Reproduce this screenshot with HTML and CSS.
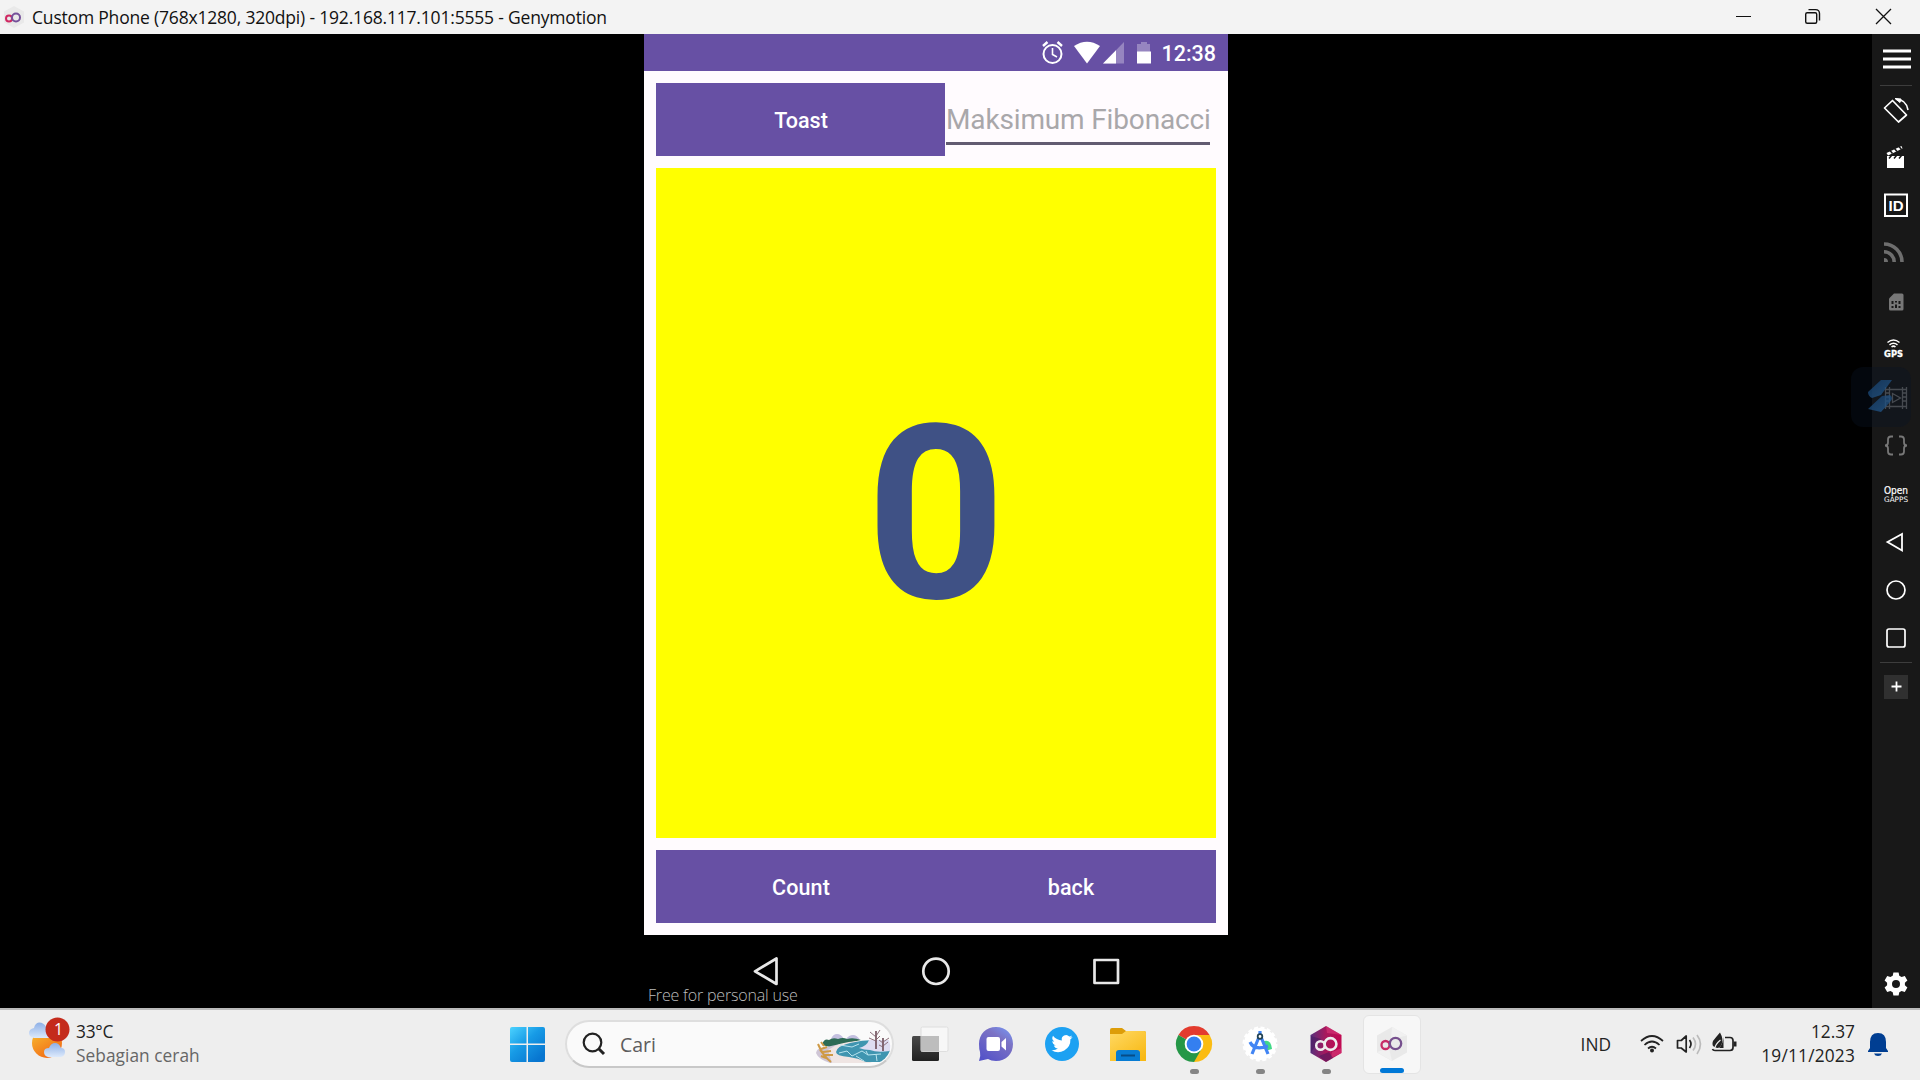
FILE: index.html
```html
<!DOCTYPE html>
<html lang="id">
<head>
<meta charset="utf-8">
<title>Genymotion</title>
<link rel="stylesheet" href="styles.css">
</head>
<body>
<header class="titlebar">
  <svg class="app-icon" width="22" height="24" viewBox="0 0 22 24"><path d="M11 1l10 5.500v11L11 23 1 17.500v-11z" fill="#e9e9e9"/><circle cx="6" cy="13.500" r="3" fill="none" stroke="#d02862" stroke-width="2"/><circle cx="13" cy="12.500" r="4" fill="none" stroke="#75509a" stroke-width="2"/></svg>
  <span class="title">Custom Phone (768x1280, 320dpi) - 192.168.117.101:5555 - Genymotion</span>
  <svg class="window-controls" width="210" height="34" viewBox="0 0 210 34" fill="none" stroke="#111"><path d="M26 16.500h15"/><rect x="95.700" y="12.700" width="11" height="10.600" rx="1.500" stroke-width="1.400"/><path d="M98.500 9.600h7q4 0 4 4v7" stroke-width="1.400"/><path d="M166 9l15 15M181 9l-15 15" stroke-width="1.300"/></svg>
</header>

<main class="workspace">
  <section class="stage">
    <div class="phone">
      <div class="statusbar">
        <svg width="110" height="24" viewBox="0 0 110 24">
          <g fill="none" stroke="#fff" stroke-width="2"><circle cx="10.500" cy="13" r="9"/><path d="M10.500 7v6.500l4.500 2.500" stroke-width="1.600"/><path d="M1 5l4.500-4M20 5l-4.500-4" stroke-width="2.400"/></g>
          <path d="M32 5Q45-3.500 58 5L45 22.500z" fill="#fff"/>
          <path d="M82 1v21.500H61z" fill="#9685c0"/><path d="M74 9.200v13.300H61z" fill="#fff"/>
          <path d="M99 1h6v2h3v8H95V3h4z" fill="#9685c0"/><path d="M95 10.500h14v12H95z" fill="#fff"/>
        </svg>
        <span class="clock">12:38</span>
      </div>
      <div class="app">
        <div class="row">
          <div class="button">Toast</div>
          <div class="input"><span>Maksimum Fibonacci</span></div>
        </div>
        <div class="counter"><span>0</span></div>
        <div class="row actions">
          <div class="button">Count</div>
          <div class="button back">back</div>
        </div>
      </div>
      <div class="navbar">
        <svg width="584" height="73" viewBox="0 0 584 73" fill="none" stroke="#e8e8e8" stroke-width="2.700" stroke-linejoin="round"><path d="M132.500 23.500v25.500L111 36.300z"/><circle cx="292" cy="36.300" r="12.700"/><rect x="450.500" y="25" width="23.500" height="23"/></svg>
        <span class="license">Free for personal use</span>
      </div>
    </div>
  </section>

  <aside class="toolbar">
    <svg width="48" height="51" viewBox="0 0 48 51"><path d="M11 17h28M11 25h28M11 33h28" stroke="#fff" stroke-width="3.200"/></svg>
    <hr>
    <svg width="48" height="48" viewBox="0 0 48 48" fill="none" stroke="#fff" stroke-width="1.700" stroke-linejoin="round"><path d="M20.500 14.500l14 14.500-8 7L12.500 22z"/><path d="M24 13.300q10 0 12 10.700" stroke-width="1.600"/><path d="M23 12.500l5 4 1-3.500z" fill="#fff" stroke-width="1"/></svg>
    <svg width="48" height="48" viewBox="0 0 48 48"><path d="M15 22h17v12H15z" fill="#fff"/><path d="M14.500 19L29.500 12l1 2.500L16 21.500z" fill="#fff"/><path d="M18 16.500l2.500 3M22.500 14.500l2.500 3M27 12.500l2.500 3M17 24.500l2.500-3M22 24.500l2.500-3M27 24.500l2.500-3" stroke="#181818" stroke-width="1.500"/></svg>
    <svg width="48" height="48" viewBox="0 0 48 48"><rect x="13" y="12.500" width="22" height="21.500" fill="none" stroke="#fff" stroke-width="2"/><text x="24" y="28.700" class="glyph id">ID</text></svg>
    <svg width="48" height="48" viewBox="0 0 48 48" fill="none" stroke="#6e6e6e" stroke-width="3.600"><path d="M12 14a18 18 0 0 1 18 18M12 21.800a10.200 10.200 0 0 1 10.200 10.200"/><path d="M12 28a4 4 0 0 1 4 4h-4z" fill="#6e6e6e" stroke="none"/></svg>
    <svg width="48" height="48" viewBox="0 0 48 48"><path d="M22 15.500h8q1.500 0 1.500 1.500v14q0 1.500-1.500 1.500H18.500Q17 32.500 17 31V20.500z" fill="#777"/><path d="M20.500 23v3m3.500-3v1.500m3.500-1.500v3M20.500 28v2m3.500-3.500V30m3.500-2v2" stroke="#181818" stroke-width="2"/></svg>
    <svg width="48" height="48" viewBox="0 0 48 48"><g fill="none" stroke="#fff" stroke-width="1.500"><path d="M15.500 16.500q6-5 12 0M17.500 18.800q4-3.200 8 0M19.500 21q2-1.700 4 0"/></g><text x="21.600" y="31" class="glyph gps" textLength="19" lengthAdjust="spacingAndGlyphs">GPS</text></svg>
    <svg width="48" height="48" viewBox="0 0 48 48" fill="none" stroke="#686868" stroke-width="1.300"><path d="M13.500 13v22M17.500 13v22M30.500 13v22M34.500 13v22M13 15.500h22M13 32.500h22M13.500 19h4m-4 4h4m-4 4h4m13-8h4m-4 4h4m-4 4h4"/><path d="M20.500 19.500l8 4.500-8 4.500z"/></svg>
    <svg width="48" height="48" viewBox="0 0 48 48" fill="none" stroke="#777" stroke-width="1.800"><path d="M21 14.500h-2q-3 0-3 3v3q0 3-3 3 3 0 3 3v3q0 3 3 3h2M27 14.500h2q3 0 3 3v3q0 3 3 3-3 0-3 3v3q0 3-3 3h-2"/></svg>
    <svg width="48" height="48" viewBox="0 0 48 48"><text x="24" y="23.500" class="glyph open" textLength="24" lengthAdjust="spacingAndGlyphs">Open</text><text x="24" y="31.500" class="glyph gapps" textLength="24" lengthAdjust="spacingAndGlyphs">GAPPS</text></svg>
    <svg width="48" height="48" viewBox="0 0 48 48"><path d="M30 16v16.500L15.500 24z" fill="none" stroke="#fff" stroke-width="1.800"/></svg>
    <svg width="48" height="48" viewBox="0 0 48 48"><circle cx="24" cy="24" r="9" fill="none" stroke="#fff" stroke-width="1.700"/></svg>
    <svg width="48" height="48" viewBox="0 0 48 48"><rect x="15" y="15" width="18" height="18" rx="2" fill="none" stroke="#fff" stroke-width="1.700"/></svg>
    <hr>
    <svg width="48" height="48" viewBox="0 0 48 48"><path d="M12 12h24v24H12z" fill="#303030"/><path d="M24.500 18.500v10M19.500 23.500h10" stroke="#fff" stroke-width="1.800"/></svg>
    <svg class="gear" width="48" height="48" viewBox="0 0 48 48" fill="#fff"><path fill-rule="evenodd" d="M21.400 12.500h5.200l.7 3.300 2.300 1.300 3.200-1 2.600 4.500-2.500 2.200v2.500l2.500 2.200-2.600 4.500-3.200-1-2.300 1.300-.7 3.200h-5.200l-.7-3.200-2.300-1.300-3.200 1-2.600-4.500 2.500-2.200v-2.500l-2.500-2.200 2.600-4.500 3.200 1 2.300-1.300zM24 20a4 4 0 1 0 0 8 4 4 0 0 0 0-8z"/></svg>
    <svg class="recorder-badge" width="62" height="62" viewBox="0 0 62 62"><defs><linearGradient id="rec" x2="1" y2="1"><stop stop-color="#17406c"/><stop offset="1" stop-color="#255d93"/></linearGradient></defs><rect x="1" y="1" width="60" height="60" rx="12" fill="#0a1326" opacity=".35"/><g fill="url(#rec)" opacity=".75"><path d="M31 14h11L31 29l-9 3q-4-2-4-6z"/><path d="M18 43l14-13 8-1q4 3 0 7l-9 10z"/></g></svg>
  </aside>
</main>

<footer class="taskbar">
  <div class="weather">
    <svg width="42" height="46" viewBox="0 0 42 46"><defs><linearGradient id="sun" x2=".6" y2="1"><stop stop-color="#f8c332"/><stop offset="1" stop-color="#f26b16"/></linearGradient><linearGradient id="cloud" x2="0" y2="1"><stop stop-color="#8eb0e7"/><stop offset="1" stop-color="#dce9fb"/></linearGradient></defs><circle cx="18" cy="27" r="15" fill="url(#sun)"/><path d="M5 22q-5-1-5-5t5-5q1-5 5-5.500 5 0 7 4.500l5 6v5z" fill="url(#cloud)"/><path d="M19 41q-4-1-4-5t5-4q2-5 6-5t6 5q4 0 4 4t-4 5z" fill="url(#cloud)"/><circle cx="28.500" cy="13.500" r="12" fill="#c42b1c"/><text x="29.500" y="19" class="badge-count">1</text></svg>
    <div class="forecast"><span>33°C</span><span class="muted">Sebagian cerah</span></div>
  </div>

  <div class="apps">
    <svg class="start" width="36" height="36" viewBox="0 0 36 36"><defs><linearGradient id="win" gradientUnits="userSpaceOnUse" x1="0" y1="0" x2="28" y2="32"><stop stop-color="#4cd3ff"/><stop offset=".5" stop-color="#179be6"/><stop offset="1" stop-color="#0876d0"/></linearGradient></defs><path d="M2 0h14.500v16.500H0V2q0-2 2-2zM18 0h15q2 0 2 2v14.500H18zM0 18h16.500v17H2q-2 0-2-2zM18 18h17v15q0 2-2 2H18z" fill="url(#win)"/></svg>
    <div class="search">
      <svg width="24" height="24" viewBox="0 0 24 24" fill="none" stroke="#222"><circle cx="10.500" cy="10.500" r="8.800" stroke-width="2.200"/><path d="M16.500 16.500l5.500 5.500" stroke-width="3"/></svg>
      <span>Cari</span>
      <svg class="scene" width="75" height="36" viewBox="0 0 75 36">
        <path d="M15 11q2-5 6-5t7 5zM30 11q3-4 7-4t7 5z" fill="#c3bfdf"/>
        <path d="M6 17q2-7 7-5 4-3 9-1 5-2 9 0 6-2 14 1l-18 4-13 3z" fill="#2d6b55"/>
        <path d="M0 25q1-5 6-5l18-4 4 14 18 5H14Q2 31 0 25z" fill="#cfc6d6"/>
        <path d="M12 22q10-8 30-9l-10 9q14 8 24 13H16z" fill="#efe5e3"/>
        <path d="M20 24q1-6 14-9 12-3 24-3h8l8 10q0 6-3 10l-4 2H50q-8-4-17-5-13-1-13-5z" fill="#3f95b0"/>
        <path d="M43 20q8-2 10-8h20q2 6 1 11-13 2-20-1-6 0-11-2z" fill="#dedcf2"/>
        <path d="M24 17l12 2 7-3M23 25l8-2 5 5 10-5 6 4 13-1M40 28l8 5m4-6-2-4m10 3 1 7" fill="none" stroke="#b9e4ee" stroke-width="1"/>
        <path d="M60 21V3M67 23V10" stroke="#6b4a55" stroke-width="1.600"/>
        <path d="M60 9l-6-5m6 9-7-3m7-2 4-6m-4 10 4-4M67 15l-4-3m4 2 6-4m-6 8 5-4m-5 5-4-2" fill="none" stroke="#80616c" stroke-width=".9"/>
        <path d="M15 34Q7 28 2 16m3 5 6-2m-4 5 8-1m-6 4 8 0m-9 0-4-5m6 8-5-2m3-10-3-4" fill="none" stroke="#cf9a45" stroke-width="2"/>
      </svg>
    </div>
    <div class="pinned">
      <div class="app-slot"><svg width="38" height="38" viewBox="0 0 38 38"><defs><linearGradient id="tv" x2="0" y2="1"><stop stop-color="#494949"/><stop offset="1" stop-color="#202020"/></linearGradient></defs><rect x="1" y="11" width="27" height="25" rx="1.500" fill="url(#tv)"/><rect x="10" y="2" width="27" height="24.500" rx="1.500" fill="#f7f7f7" stroke="#dedede"/><path d="M10 11h18v15.500H10z" fill="#bdbdbd"/></svg></div>
      <div class="app-slot"><svg width="38" height="38" viewBox="0 0 38 38"><defs><linearGradient id="chat" x1=".9" y1="0" x2=".2" y2="1"><stop stop-color="#7796f3"/><stop offset=".35" stop-color="#7b72c4"/><stop offset="1" stop-color="#5553c8"/></linearGradient></defs><path d="M19 2c10 0 17 7 17 17s-7 17-17 17q-5 0-8-2l-9 2q2-5 1-9-1-3-1-8C2 9 9 2 19 2z" fill="url(#chat)"/><rect x="9.500" y="12" width="13.500" height="14" rx="2" fill="#fff"/><path d="M24.500 17l4.500-4v12.500l-4.500-4z" fill="#fff"/></svg></div>
      <div class="app-slot"><svg width="38" height="38" viewBox="0 0 38 38"><circle cx="19" cy="19" r="17" fill="#1da1f2"/><g transform="translate(8.500 8) scale(.88)"><path fill="#fff" d="M24 4.600a10 10 0 0 1-2.800.8 5 5 0 0 0 2.100-2.700 10 10 0 0 1-3.100 1.200 4.900 4.900 0 0 0-8.400 4.500A14 14 0 0 1 1.700 3.200a4.900 4.900 0 0 0 1.500 6.500 5 5 0 0 1-2.200-.6 4.900 4.900 0 0 0 3.900 4.900 5 5 0 0 1-2.200.1 4.900 4.900 0 0 0 4.600 3.400A10 10 0 0 1 0 19.500a14 14 0 0 0 21.500-12.400A10 10 0 0 0 24 4.600z"/></g></svg></div>
      <div class="app-slot"><svg width="38" height="38" viewBox="0 0 38 38"><defs><linearGradient id="folder" x2=".8" y2="1"><stop stop-color="#ffd964"/><stop offset="1" stop-color="#f8b914"/></linearGradient></defs><path d="M1 5q0-2 2-2h10l4 3h18q2 0 2 2v9H1z" fill="#dd9d09"/><path d="M1 9h12l4-3h18q2 0 2 2v28H1z" fill="url(#folder)"/><path d="M7 36V28q0-3 3-3h18q3 0 3 3v8z" fill="#087cd3"/><path d="M12 30.500h14" stroke="#074c86" stroke-width="2"/></svg></div>
      <div class="app-slot running"><svg width="38" height="38" viewBox="0 0 38 38"><path d="M19 19L3.400 10A18 18 0 0 1 34.600 10z" fill="#e33b2e"/><path d="M19 19V10h15.600A18 18 0 0 1 19 37z" fill="#fbbc12"/><path d="M19 19l7.800 4.500L19 37A18 18 0 0 1 3.400 10z" fill="#259747"/><circle cx="19" cy="19" r="9.300" fill="#fff"/><circle cx="19" cy="19" r="7.400" fill="#347ff0"/></svg></div>
      <div class="app-slot running"><svg width="38" height="38" viewBox="0 0 38 38"><circle cx="19" cy="19" r="16" fill="#fff"/><circle cx="19" cy="19" r="16.500" fill="none" stroke="#fff" stroke-width="2" stroke-dasharray="4 2.480"/><path d="M23 16q7-2 8 8l-7 2z" fill="#41d987"/><path d="M18 12l-7 17M20 12l7 17M9 17q4 9 18 4M19 6v5" fill="none" stroke="#4285f4" stroke-width="3.200"/><circle cx="19" cy="11.500" r="2.300" fill="#fff" stroke="#234353" stroke-width="1.800"/></svg></div>
      <div class="app-slot running"><svg width="38" height="38" viewBox="0 0 38 38"><defs><linearGradient id="geny"><stop stop-color="#58307d"/><stop offset=".5" stop-color="#a9185c"/><stop offset="1" stop-color="#c10a52"/></linearGradient></defs><path d="M19 1l15.500 9v18L19 37 3.500 28V10z" fill="url(#geny)"/><path d="M19 1l15.500 9L20 8zM25 27l9.500-4v5L24 33z" fill="#e0407f" opacity=".5"/><path d="M4 11l10 3-10 13zM12 31l10-4 4 6-7 4z" fill="#40195d" opacity=".5"/><circle cx="13.500" cy="20.500" r="4.300" fill="none" stroke="#eee" stroke-width="2.500"/><circle cx="23.500" cy="19" r="5.900" fill="none" stroke="#eee" stroke-width="2.600"/></svg></div>
      <div class="app-slot active"><svg width="38" height="38" viewBox="0 0 38 38"><path d="M19 2l15 8.500v17L19 36 4 27.500v-17z" fill="#e9e9e9"/><path d="M19 2l15 8.500L18 14zM4 27l12-4 3 13z" fill="#f1f1f1"/><circle cx="12.500" cy="20" r="4" fill="none" stroke="#c72c66" stroke-width="2.300"/><circle cx="22.500" cy="18.500" r="5.700" fill="none" stroke="#76508e" stroke-width="2.300"/></svg></div>
    </div>
  </div>

  <div class="tray">
    <span class="lang">IND</span>
    <svg class="tray-icons" width="100" height="26" viewBox="0 0 100 26" fill="none" stroke="#222" stroke-width="1.700"><path d="M2 10q11-10 22 0M5.500 14q7.500-7 15 0M9 17.500q4-3.500 8 0"/><circle cx="13" cy="19.500" r="2" fill="#222" stroke="none"/><path d="M38.500 9.500h3.700l5-4.500v16l-5-4h-3.700z" stroke-linejoin="round"/><path d="M50.500 9q3 4 0 8"/><path d="M54 6.500q5 6.500 0 13M58 4q7 9 0 19" stroke="#bbb"/><path d="M86 6.500h5q3 0 3 3v7q0 3-3 3H76q-2 0-2.500-1.500"/><path d="M96 10.500v5" stroke-width="3"/><path d="M81 1.500q4 7 1.500 12-2 4.500-6 3-4.500-1.500-2.500-6.500 3-4 7-8.500z" fill="#222" stroke="none"/><path d="M84.500 6v11H80q4-4 4.500-11z" fill="#222" stroke="none"/><path d="M75.500 18q1-5 6-9" stroke="#eee" stroke-width="1.200"/></svg>
    <div class="datetime"><span>12.37</span><span class="date">19/11/2023</span></div>
    <svg class="bell" width="22" height="26" viewBox="0 0 22 26" fill="#003e92"><path d="M11 1q8 0 8 9v6l2 3v1H1v-1l2-3v-6q0-9 8-9zM7 21.500h8q-1 2.500-4 2.500t-4-2.500z"/></svg>
  </div>
</footer>
</body>
</html>
```
FILE: styles.css
```css
* { box-sizing: border-box; }
body { margin: 0; width: 1920px; height: 1080px; overflow: hidden; display: flex; flex-direction: column; background: #000; font-family: "Open Sans", "Noto Sans", sans-serif; }
svg { display: block; flex: none; }
span { white-space: nowrap; }

.titlebar { height: 34px; flex: none; display: flex; align-items: center; padding-left: 3px; background: #f3f3f3; color: #111; }
.app-icon { margin-right: 7px; }
.title { font-size: 17.500px; letter-spacing: -0.190px; line-height: 33px; }
.window-controls { margin-left: auto; }

.workspace { height: 974px; flex: none; display: flex; background: #000; }
.stage { flex: 1; padding-left: 644px; }
.phone { width: 584px; height: 974px; display: flex; flex-direction: column; font-family: Roboto, sans-serif; }
.statusbar { height: 36.500px; flex: none; background: #6750a4; display: flex; padding: 7px 12px 0 0; justify-content: flex-end; gap: 9px; color: #fff; }
.clock { font-size: 21.500px; font-weight: 500; line-height: 25px; }
.app { height: 864.500px; flex: none; background: #fffbfe; display: flex; flex-direction: column; gap: 12px; padding: 12px; }
.row { height: 73px; flex: none; display: flex; }
.button { width: 289px; display: flex; align-items: center; justify-content: center; padding: 2px 0 0 1px; background: #6750a4; color: #fff; font-size: 21.500px; font-weight: 500; }
.actions { background: #6750a4; }
.actions .button { padding-top: 1px; letter-spacing: 0.100px; }
.button.back { width: 251px; }
.input { width: 264px; height: 62px; margin-left: 1px; border-bottom: 3px solid #625b71; color: #a9a7aa; font-size: 28px; letter-spacing: -0.150px; line-height: 73px; }
.counter { flex: 1; background: #ff0; color: #3f5185; display: flex; align-items: center; justify-content: center; font-size: 243px; font-weight: 700; line-height: 1; padding-top: 25px; }
.navbar { height: 73px; position: relative; }
.license { position: absolute; left: 4px; bottom: 2px; color: #bdbdbd; font: 300 16px/22px "Open Sans", sans-serif; letter-spacing: -0.180px; }

.toolbar { position: relative; width: 48px; background: #181818; display: flex; flex-direction: column; align-items: center; }
.toolbar hr { width: 32px; height: 1px; flex: none; border: 0; margin: 0; background: #3d3d3d; }
.gear { margin-top: auto; }
.recorder-badge { position: absolute; left: -22px; top: 332px; }
.glyph { fill: #fff; text-anchor: middle; }
.id { font: 700 15px "Liberation Sans", sans-serif; }
.gps { font: 700 9px "DejaVu Sans", sans-serif; stroke: #fff; stroke-width: 0.300px; }
.open { font: 400 10px "DejaVu Sans", sans-serif; stroke: #fff; stroke-width: 0.200px; }
.gapps { font: 7.500px "DejaVu Sans", sans-serif; }

.taskbar { height: 72px; flex: none; display: flex; border-top: 2px solid #bbb; background: #eee; color: #222; }
.weather { width: 510px; display: flex; padding: 6px 0 0 29px; gap: 5px; }
.forecast { display: flex; flex-direction: column; font-size: 17.300px; line-height: 24px; letter-spacing: -0.200px; padding-top: 4px; }
.muted { color: #666; letter-spacing: 0.050px; }
.badge-count { fill: #fff; font: 16px "Open Sans", sans-serif; text-anchor: middle; }
.apps { display: flex; }
.start { margin-top: 17px; }
.search { width: 329px; height: 48px; margin: 10px 3px 0 19px; border: 2px solid #dedede; border-bottom-color: #c8c8c8; border-radius: 24px; background: #fafafa; display: flex; align-items: center; padding-left: 15px; color: #5d5d5d; font-size: 19.500px; }
.search span { margin-left: 14px; }
.scene { margin: 3px 1px 0 auto; border-radius: 0 16px 20px 0; }
.pinned { display: flex; }
.app-slot { width: 58px; height: 59px; margin: 5px 4px 0; display: flex; flex-direction: column; align-items: center; justify-content: space-between; padding-top: 10px; }
.running::after { content: ""; width: 9px; height: 5px; border-radius: 3px; background: #858585; }
.active { background: #f7f7f7; border: 1px solid #e4e4e4; border-radius: 6px; padding-top: 9px; }
.active::after { content: ""; width: 24px; height: 5px; border-radius: 3px; background: #0078d7; }
.tray { margin-left: auto; display: flex; font-size: 17.300px; padding-right: 31px; }
.lang { line-height: 70px; margin-right: 28px; }
.tray-icons { margin-top: 21px; margin-right: 22px; }
.datetime { display: flex; flex-direction: column; align-items: flex-end; line-height: 24px; padding-top: 10px; width: 94px; }
.date { letter-spacing: 0.200px; }
.bell { margin: 22px 0 0 12px; }
```
